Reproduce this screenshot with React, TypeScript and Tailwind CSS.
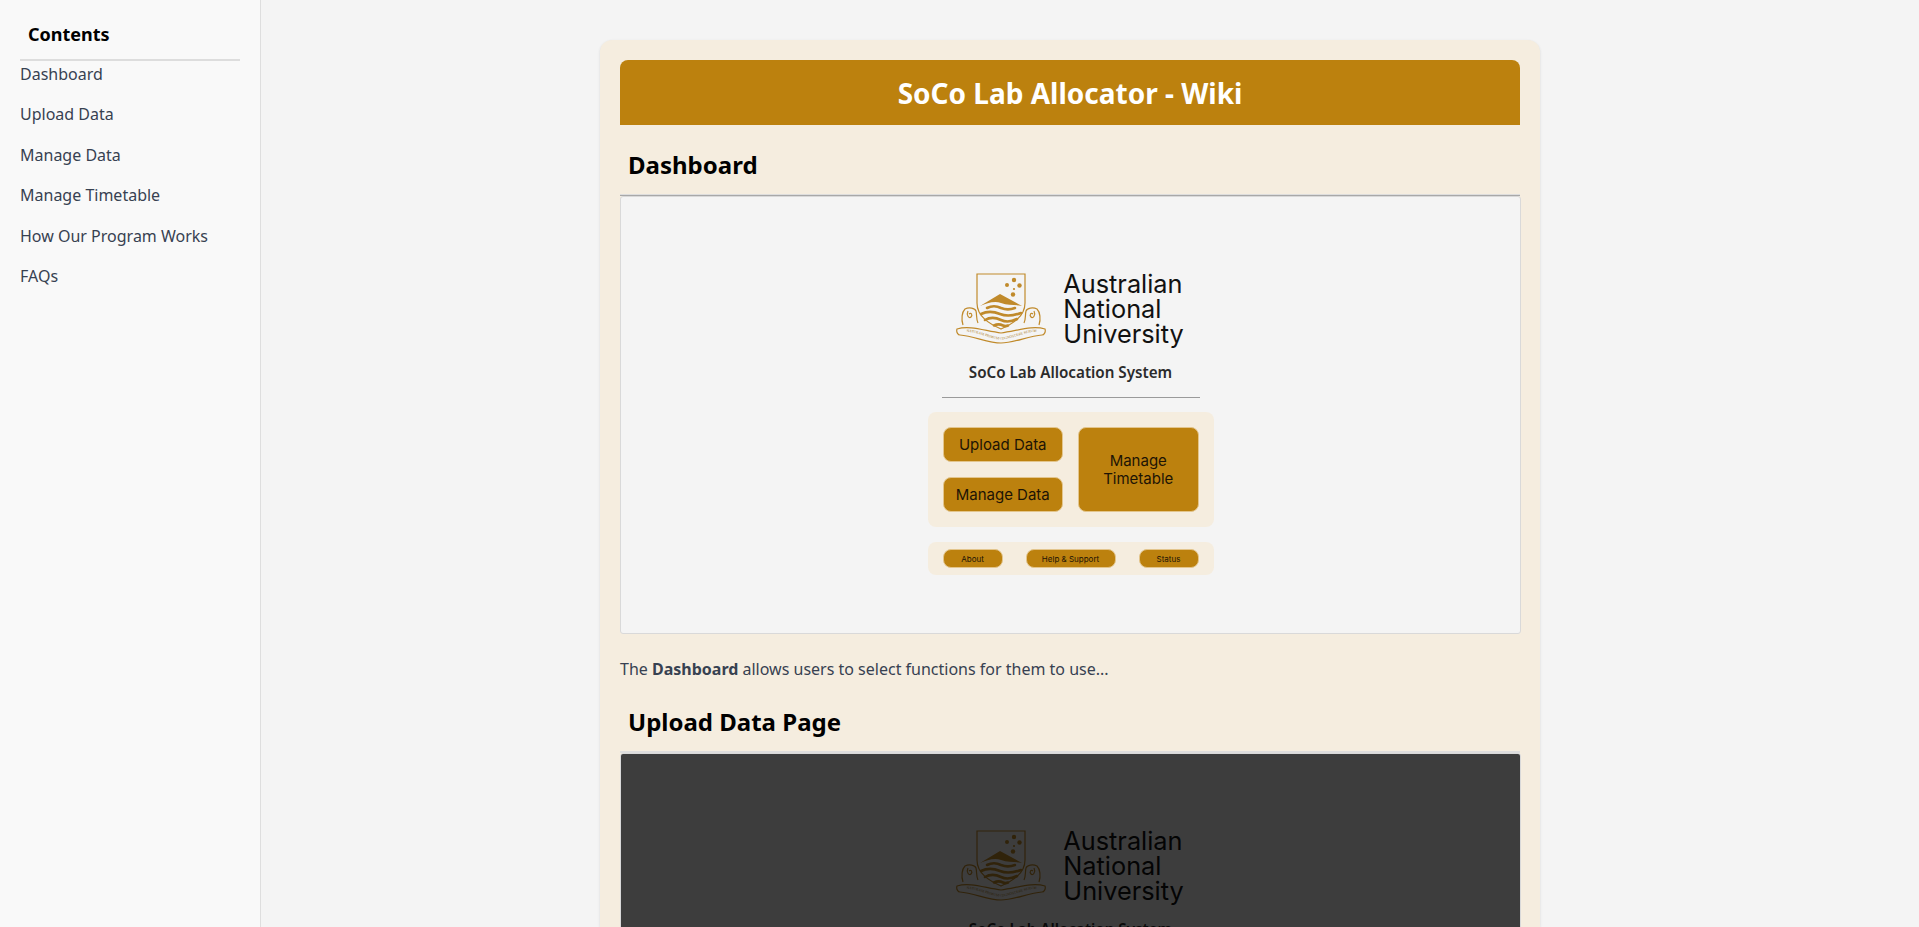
const links = ["Dashboard", "Upload Data", "Manage Data", "Manage Timetable", "How Our Program Works", "FAQs"];

const Crest = () => (
  <svg viewBox="0 0 110 90" className="w-[110px] h-[90px] shrink-0 mr-[3px]" fill="none" stroke="#c08a2b" strokeWidth="1.200">
    <path d="M27 9H75V38C75 52 62 59 51 64C40 59 27 52 27 38Z" />
    <g fill="#c08a2b" stroke="none">
      <circle cx="64" cy="15" r="2.200" />
      <circle cx="57" cy="20" r="2" />
      <circle cx="69.500" cy="20.500" r="2.200" />
      <circle cx="64" cy="24" r="1.100" />
      <circle cx="63" cy="29.500" r="2.200" />
      <path d="M50 29L72 41C65 39.500 58 40.500 51 38C44 35.500 37 38.500 30 41Z" />
    </g>
    <g strokeWidth="2.600" strokeLinecap="round">
      <path d="M37 43C42 40.500 47 41 51 43C56 45 61 44.500 65 43" />
      <path d="M31 49C37 46 44 46.500 50 49C56 51.500 64 50.500 71 48" />
      <path d="M35 55C40 52 46 52.500 51 55C56 57.500 62 56.500 67 54" />
      <path d="M44 60.500C47 59 50 59 53 60.500C55 61.500 57 61 58 60.500" />
    </g>
    <path d="M13 60C11 54 12 47 15 44C19 42 25 43 26 46C27 50 26 54 28 58" />
    <path d="M18 46C16 50 19 54 21 52C23 50 21 47 19 49" />
    <path d="M89 60C91 54 90 47 87 44C83 42 77 43 76 46C75 50 76 54 74 58" />
    <path d="M84 46C86 50 83 54 81 52C79 50 81 47 83 49" />
    <path d="M7 64C20 60 35 66 51 68C67 66 82 60 95 64C96 67 94 70 92 70C78 71 64 78 51 78C38 78 24 71 10 70C8 70 6 67 7 64Z" />
    <path id="crest-banner" d="M11 67C25 65 38 74 51 74.500C64 74 77 65 92 67" stroke="none" />
    <text fontFamily="'Liberation Serif', serif" fontSize="3.600" fill="#a97a25" stroke="none">
      <textPath href="#crest-banner" startOffset="50%" textAnchor="middle">NATURAM PRIMUM COGNOSCERE RERUM</textPath>
    </text>
  </svg>
);

const Tile = ({ label, className }: { label: string; className: string }) => (
  <div className={`flex items-center justify-center text-center bg-[#bc810e] border border-[#e3c58c] text-[#1c1405] ${className}`}>{label}</div>
);

const DashboardShot = ({ dimmed }: { dimmed?: boolean }) => (
  <div className="relative h-[438px] shrink-0 -mr-px overflow-hidden rounded-[3px] border border-[#d9d9d9] bg-[#f4f4f4] flex flex-col items-center pt-[68px]">
    <div className="flex items-start -ml-[7px]">
      <Crest />
      <div className="pt-[6px] font-['Inter',sans-serif] text-[25.300px] leading-[25px] text-[#111111]">
        Australian
        <br />
        National
        <br />
        University
      </div>
    </div>
    <p className="mt-[7px] text-[15.200px] leading-[20px] font-semibold text-[#2b2b2b] font-['Noto_Sans',sans-serif]">SoCo Lab Allocation System</p>
    <div className="mt-[15px] w-[258px] h-px bg-[#9a9a9a]" />
    <div className="mt-[14px] w-[286px] rounded-lg bg-[#f5eddf] p-[15px] grid grid-cols-2 gap-[15px] font-['Inter',sans-serif] text-[15px] leading-[18px]">
      <div className="flex flex-col gap-[15px]">
        <Tile label="Upload Data" className="h-[35px] rounded-lg" />
        <Tile label="Manage Data" className="h-[35px] rounded-lg" />
      </div>
      <Tile label="Manage Timetable" className="h-[85px] rounded-lg px-4" />
    </div>
    <div className="mt-[15px] w-[286px] h-[33px] rounded-lg bg-[#f5eddf] px-[15px] flex items-center justify-between font-['Inter',sans-serif] text-[8px]">
      <Tile label="About" className="w-[60px] h-[19px] rounded-lg" />
      <Tile label="Help & Support" className="w-[90px] h-[19px] rounded-lg" />
      <Tile label="Status" className="w-[60px] h-[19px] rounded-lg" />
    </div>
    {dimmed && <div className="absolute inset-0 bg-black/75" />}
  </div>
);

const SectionTitle = ({ title }: { title: string }) => (
  <h2 className="px-2 pb-[13px] text-2xl leading-[32px] font-bold text-black border-b-2 border-[#dddddd]">{title}</h2>
);

export default function App() {
  return (
    <div className="flex h-[927px] overflow-hidden bg-[#f4f4f4] font-['Noto_Sans',sans-serif]">
      <aside className="w-[261px] shrink-0 bg-[#f9f9f9] border-r border-[#dedede] px-5 pt-[22px]">
        <h3 className="pl-2 pb-[13px] text-lg leading-6 font-bold text-black border-b-2 border-[#dddddd]">Contents</h3>
        <nav className="flex flex-col gap-[16.600px] text-base leading-6 text-[#374151] pt-[0.500px]">
          {links.map((l) => (
            <a key={l} href="#">
              {l}
            </a>
          ))}
        </nav>
      </aside>
      <main className="flex-1 flex justify-center pt-10 pl-[1px] pr-[41px]">
        <div className="w-[940px] shrink-0 rounded-t-xl bg-[#f5eddf] px-5 pt-5 shadow-sm">
          <h1 className="h-[65px] rounded-t-lg bg-[#bc810e] flex items-center justify-center text-[28px] font-bold text-white">SoCo Lab Allocator - Wiki</h1>
          <div className="flex flex-col">
            <div className="pt-6">
              <SectionTitle title="Dashboard" />
            </div>
            <div className="h-px -mt-px bg-[#a8a8a8]" />
            <DashboardShot />
            <p className="mt-[23px] text-base leading-6 text-[#374151]">
              The <strong className="font-bold">Dashboard</strong> allows users to select functions for them to use...
            </p>
            <div className="pt-[25px]">
              <SectionTitle title="Upload Data Page" />
            </div>
            <DashboardShot dimmed />
          </div>
        </div>
      </main>
    </div>
  );
}
